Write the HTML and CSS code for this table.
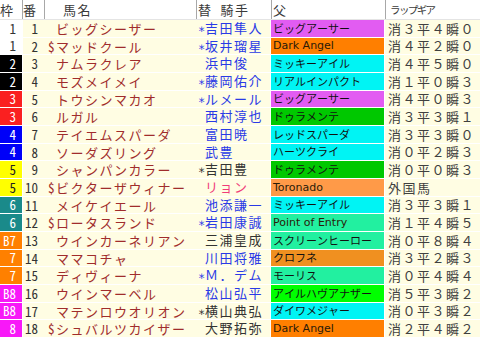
FILE: index.html
```html
<!DOCTYPE html>
<html lang="ja">
<head>
<meta charset="utf-8">
<link rel="stylesheet" href="styles.css">
</head>
<body>
<div class="table">
  <div class="head">
    <div class="h h-waku">枠</div>
    <div class="h h-ban">番</div>
    <div class="h h-name">馬名</div>
    <div class="h h-jockey">替 騎手</div>
    <div class="h h-sire">父</div>
    <div class="h h-gear">ラップギア</div>
  </div>
  <div class="body">
    <div class="waku w1">1</div><div class="main"><span class="num">1</span><span class="name"> ビッグシーザー</span><span class="jk"><span class="ast">∗</span>吉田隼人</span></div><div class="sire s-big">ビッグアーサー</div><div class="gear">消３平４瞬０</div>
    <div class="waku w1">1</div><div class="main"><span class="num">2</span><span class="name">$マッドクール</span><span class="jk"><span class="ast">∗</span>坂井瑠星</span></div><div class="sire s-dark en">Dark Angel</div><div class="gear">消４平２瞬０</div>
    <div class="waku w2">2</div><div class="main"><span class="num">3</span><span class="name"> ナムラクレア</span><span class="jk"><span class="ast"> </span>浜中俊</span></div><div class="sire s-cyan">ミッキーアイル</div><div class="gear">消４平５瞬０</div>
    <div class="waku w2">2</div><div class="main"><span class="num">4</span><span class="name"> モズメイメイ</span><span class="jk"><span class="ast">∗</span>藤岡佑介</span></div><div class="sire s-cyan">リアルインパクト</div><div class="gear">消１平０瞬３</div>
    <div class="waku w3">3</div><div class="main"><span class="num">5</span><span class="name"> トウシンマカオ</span><span class="jk"><span class="ast">∗</span>ルメール</span></div><div class="sire s-big">ビッグアーサー</div><div class="gear">消４平０瞬３</div>
    <div class="waku w3">3</div><div class="main"><span class="num">6</span><span class="name"> ルガル</span><span class="jk"><span class="ast"> </span>西村淳也</span></div><div class="sire s-green">ドゥラメンテ</div><div class="gear">消３平３瞬１</div>
    <div class="waku w4">4</div><div class="main"><span class="num">7</span><span class="name"> テイエムスパーダ</span><span class="jk"><span class="ast"> </span>富田暁</span></div><div class="sire s-cyan">レッドスパーダ</div><div class="gear">消３平３瞬０</div>
    <div class="waku w4">4</div><div class="main"><span class="num">8</span><span class="name"> ソーダズリング</span><span class="jk"><span class="ast"> </span>武豊</span></div><div class="sire s-cyan">ハーツクライ</div><div class="gear">消０平２瞬３</div>
    <div class="waku w5">5</div><div class="main"><span class="num">9</span><span class="name"> シャンパンカラー</span><span class="jk dk"><span class="ast">∗</span>吉田豊</span></div><div class="sire s-green">ドゥラメンテ</div><div class="gear">消０平０瞬３</div>
    <div class="waku w5">5</div><div class="main"><span class="num">10</span><span class="name">$ビクターザウィナー</span><span class="jk pk"><span class="ast"> </span>リョン</span></div><div class="sire s-toro en">Toronado</div><div class="gear">外国馬</div>
    <div class="waku w6">6</div><div class="main"><span class="num">11</span><span class="name"> メイケイエール</span><span class="jk"><span class="ast"> </span>池添謙一</span></div><div class="sire s-cyan">ミッキーアイル</div><div class="gear">消３平３瞬１</div>
    <div class="waku w6">6</div><div class="main"><span class="num">12</span><span class="name">$ロータスランド</span><span class="jk"><span class="ast">∗</span>岩田康誠</span></div><div class="sire s-mint en">Point of Entry</div><div class="gear">消１平４瞬５</div>
    <div class="waku w7">B7</div><div class="main"><span class="num">13</span><span class="name"> ウインカーネリアン</span><span class="jk dk"><span class="ast"> </span>三浦皇成</span></div><div class="sire s-mint">スクリーンヒーロー</div><div class="gear">消０平８瞬４</div>
    <div class="waku w7">7</div><div class="main"><span class="num">14</span><span class="name"> ママコチャ</span><span class="jk"><span class="ast"> </span>川田将雅</span></div><div class="sire s-kuro">クロフネ</div><div class="gear">消３平２瞬３</div>
    <div class="waku w7">7</div><div class="main"><span class="num">15</span><span class="name"> ディヴィーナ</span><span class="jk"><span class="ast">∗</span>Ｍ．デム</span></div><div class="sire s-mint">モーリス</div><div class="gear">消０平４瞬４</div>
    <div class="waku w8">B8</div><div class="main"><span class="num">16</span><span class="name"> ウインマーベル</span><span class="jk"><span class="ast"> </span>松山弘平</span></div><div class="sire s-lime">アイルハヴアナザー</div><div class="gear">消５平３瞬２</div>
    <div class="waku w8">B8</div><div class="main"><span class="num">17</span><span class="name"> マテンロウオリオン</span><span class="jk dk"><span class="ast">∗</span>横山典弘</span></div><div class="sire s-cyan">ダイワメジャー</div><div class="gear">消０平３瞬２</div>
    <div class="waku w8">8</div><div class="main"><span class="num">18</span><span class="name">$シュバルツカイザー</span><span class="jk dk"><span class="ast"> </span>大野拓弥</span></div><div class="sire s-dark en">Dark Angel</div><div class="gear">消２平４瞬２</div>
  </div>
</div>
</body>
</html>
```
FILE: styles.css
```css
html, body {
  margin: 0;
  padding: 0;
  background: #ffffff;
}
body {
  width: 480px;
  height: 337px;
  overflow: hidden;
  font-family: "Noto Sans Mono CJK JP", "Noto Sans CJK JP", monospace;
  font-size: 13px;
}
.table {
  width: 480px;
}
.head {
  display: flex;
  height: 19px;
  border-bottom: 1px solid #e4e4e4;
  background: #ffffff;
  color: #3a3a3a;
  line-height: 19px;
  letter-spacing: 1.5px;
  white-space: pre;
}
.h {
  box-sizing: border-box;
  height: 19px;
  border-left: 1px solid #a8a8a8;
}
.h-waku { width: 22px; border-left: none; }
.h-ban { width: 22px; padding-left: 0; }
.h-name { width: 152px; padding-left: 18px; }
.h-jockey { width: 75px; padding-left: 1px; }
.h-sire { width: 114px; padding-left: 1px; }
.h-gear {
  flex: 1;
  padding-left: 4px;
  font-size: 10.5px;
  letter-spacing: -1.6px;
}
.body {
  display: grid;
  grid-template-columns: 22px 247px 113px 95px;
  grid-template-rows: repeat(18, 1fr);
  column-gap: 1px;
  row-gap: 1px;
  height: 317px;
  background: #ffffff;
}
.body > div {
  display: flex;
  align-items: center;
  white-space: pre;
  line-height: 15px;
  overflow: visible;
  min-height: 0;
}
.waku {
  justify-content: flex-end;
  padding-right: 6px;
  color: #ffffff;
}
.w1 { background: #ffffff; color: #333333; }
.w2 { background: #000000; }
.w3 { background: #fa2020; }
.w4 { background: #0000f8; }
.w5 { background: #ffff00; color: #222222; }
.w6 { background: #1a8a8a; }
.w7 { background: #ff8000; }
.w8 { background: #f818f8; }
.main {
  background: #fffde3;
  display: grid !important;
  grid-template-columns: 21px 152px 74px;
  align-items: center;
}
.num {
  text-align: right;
  padding-right: 6px;
  color: #333333;
}
.name {
  padding-left: 4px;
  color: #a02c2c;
  letter-spacing: 1.5px;
  white-space: pre;
  overflow: visible;
}
.jk {
  padding-left: 2px;
  color: #2a3ae6;
  letter-spacing: 1.5px;
  white-space: pre;
}
.ast {
  display: inline-block;
  width: 7px;
  letter-spacing: 0;
  font-family: "DejaVu Sans Mono", monospace;
  font-size: 12px;
}
.jk.dk { color: #333333; }
.jk.pk { color: #f03c7a; }
.sire {
  padding-left: 2px;
  font-size: 11px;
  color: #111111;
  letter-spacing: 0;
  overflow: hidden;
}
.sire.en {
  font-family: "DejaVu Sans", sans-serif;
  font-size: 11px;
  color: #2a1a08;
}
.s-big { background: #e25cf2; }
.s-dark { background: #ff7f00; }
.s-cyan { background: #00f4f4; }
.s-green { background: #00c800; }
.s-toro { background: #ff9a48; }
.s-mint { background: #22f0a0; }
.s-kuro { background: #f09020; }
.s-lime { background: #00ff00; }
.gear {
  background: #fffde3;
  padding-left: 3px;
  color: #404040;
  letter-spacing: 1.5px;
}
```
